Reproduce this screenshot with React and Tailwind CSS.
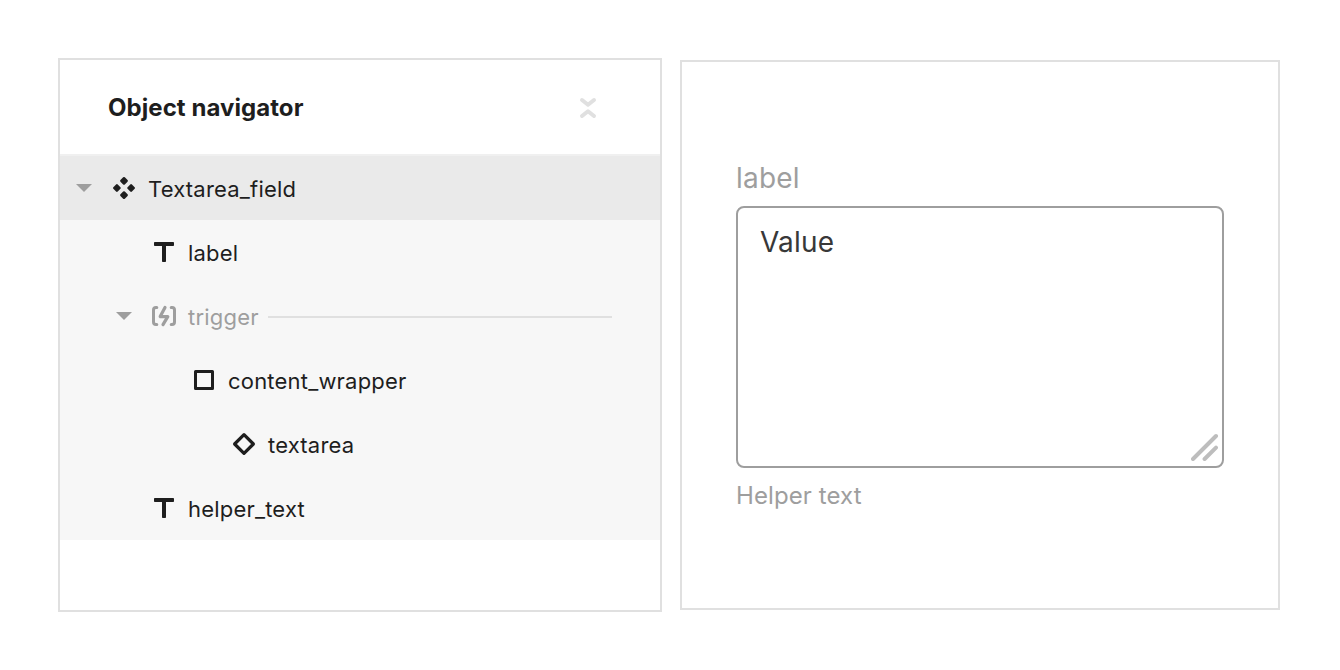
const ICONS = {
  component: (
    <svg width="24" height="24" viewBox="0 0 24 24" fill="#1e1e1e" stroke="#1e1e1e" strokeWidth="2.4" strokeLinejoin="round">
      <path d="M12 2.2 14.7 4.9 12 7.6 9.3 4.9zM4.9 9.3 7.6 12 4.9 14.7 2.2 12zM19.1 9.3 21.8 12 19.1 14.7 16.4 12zM12 16.4 14.7 19.1 12 21.8 9.3 19.1z" />
    </svg>
  ),
  text: (
    <svg width="24" height="24" viewBox="0 0 24 24" fill="#1e1e1e">
      <path d="M2.8 2H21.2a.8.8 0 0 1 .8.8V5.2a.8.8 0 0 1-.8.8H14V21.2a.8.8 0 0 1-.8.8H10.8a.8.8 0 0 1-.8-.8V6H2.8a.8.8 0 0 1-.8-.8V2.8a.8.8 0 0 1 .8-.8z" />
    </svg>
  ),
  trigger: (
    <svg width="26" height="24" viewBox="0 0 26 24" fill="none" stroke="#9e9e9e" strokeWidth="3" strokeLinecap="round" strokeLinejoin="round">
      <path d="M5.8 3.5H5Q2.5 3.5 2.5 6V18Q2.5 20.5 5 20.5H5.8M20.2 3.5H21Q23.5 3.5 23.5 6V18Q23.5 20.5 21 20.5H20.2" />
      <path d="M14 3.4 9.2 12.6H16.8L12 20.6" strokeWidth="3.2" />
    </svg>
  ),
  square: (
    <svg width="24" height="24" viewBox="0 0 24 24" fill="none" stroke="#1e1e1e" strokeWidth="3" strokeLinejoin="round">
      <rect x="3.5" y="3.5" width="17" height="17" />
    </svg>
  ),
  diamond: (
    <svg width="24" height="24" viewBox="0 0 24 24" fill="none" stroke="#1e1e1e" strokeWidth="3.2" strokeLinejoin="round">
      <path d="M12 2.6 21.4 12 12 21.4 2.6 12z" />
    </svg>
  ),
};

function Row({ indent, icon, label, open, selected, muted }) {
  return (
    <div className={`flex h-16 items-center pr-12 ${indent} ${selected ? "bg-[#eaeaea]" : "bg-[#f7f7f7]"}`}>
      <span className="flex w-10 shrink-0 justify-center">
        {open && (
          <svg width="16" height="8" viewBox="0 0 16 8" fill="#9e9e9e">
            <path d="M0 0H16L8 8z" />
          </svg>
        )}
      </span>
      <span className="flex w-10 shrink-0 justify-center">{ICONS[icon]}</span>
      <span className={`ml-1 pt-0.5 text-[22px] leading-8 tracking-[0.2px] ${muted ? "text-[#9e9e9e]" : "text-[#1e1e1e]"}`}>
        {label}
      </span>
      {muted && <span className="mt-0.5 ml-[9px] h-0.5 flex-1 bg-[#e0e0e0]" />}
    </div>
  );
}

export default function App() {
  return (
    <div className="flex h-[670px] w-[1340px] items-start gap-[18px] bg-white pt-[58px] pl-[58px] font-['Inter',sans-serif]">
      <section className="h-[554px] w-[604px] border-2 border-[#e0e0e0] bg-white">
        <header className="flex h-24 items-center justify-between border-b-2 border-[#f0f0f0] pr-[60px] pl-12">
          <h1 className="pt-0.5 text-2xl leading-8 font-bold tracking-[0.06px] text-[#1e1e1e]">Object navigator</h1>
          <svg className="mt-0.5" width="24" height="24" viewBox="0 0 24 24" fill="none" stroke="#e0e0e0" strokeWidth="4" strokeLinecap="round" strokeLinejoin="round">
            <path d="M6 4 12 8.8 18 4M6 20 12 15.2 18 20" />
          </svg>
        </header>
        <Row indent="pl-1" icon="component" label="Textarea_field" open selected />
        <Row indent="pl-11" icon="text" label="label" />
        <Row indent="pl-11" icon="trigger" label="trigger" open muted />
        <Row indent="pl-[84px]" icon="square" label="content_wrapper" />
        <Row indent="pl-[124px]" icon="diamond" label="textarea" />
        <Row indent="pl-11" icon="text" label="helper_text" />
      </section>
      <section className="mt-0.5 h-[550px] w-[600px] border-2 border-[#e0e0e0] bg-white px-[54px] pt-24">
        <div className="h-12 text-[28px] leading-10 tracking-[0.2px] text-[#9e9e9e]">label</div>
        <div className="flex h-[262px] justify-between rounded-lg border-2 border-[#9e9e9e] pt-3.5 pl-[22px]">
          <span className="text-[28px] leading-10 tracking-[0.2px] text-[#383838]">Value</span>
          <svg className="mr-[3px] mb-[5px] self-end" width="28" height="28" viewBox="0 0 28 28" stroke="#bdbdbd" strokeWidth="4" strokeLinecap="round">
            <path d="M2 26 25 3M13.6 26 25 14.6" />
          </svg>
        </div>
        <div className="pt-3 text-2xl leading-8 tracking-[0.1px] text-[#9e9e9e]">Helper text</div>
      </section>
    </div>
  );
}
